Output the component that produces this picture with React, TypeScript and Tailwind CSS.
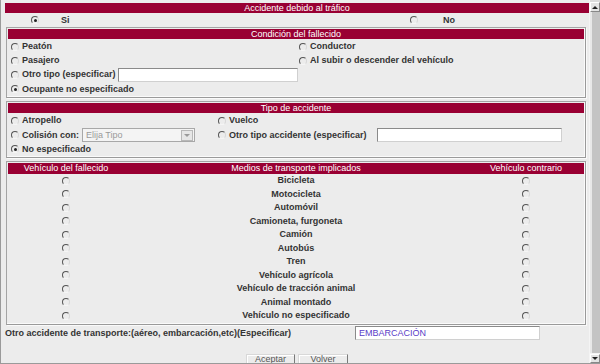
import React from 'react';

const RED = 'bg-[#990033]';

function Radio({ checked = false }: { checked?: boolean }) {
  return (
    <span className="inline-flex h-[8px] w-[8px] shrink-0 items-center justify-center rounded-full border border-t-[#555] border-l-[#555] border-r-[#d8d8d8] border-b-[#f6f6f6] bg-[#ececec]">
      {checked && <span className="h-[3px] w-[3px] rounded-full bg-[#222]" />}
    </span>
  );
}

function Option({ label, checked = false }: { label: string; checked?: boolean }) {
  return (
    <div className="flex shrink-0 items-center gap-[3px] pl-[3px]">
      <Radio checked={checked} />
      <span className="font-bold text-[#333]">{label}</span>
    </div>
  );
}

function TextBox({ className = '', value = '' }: { className?: string; value?: string }) {
  return (
    <div
      className={`flex h-[14px] items-center border border-t-[#8a8a8a] border-l-[#8a8a8a] border-r-[#d0d0d0] border-b-[#d0d0d0] bg-white px-[3px] text-[#5a3cc8] ${className}`}
    >
      {value}
    </div>
  );
}

function Header({ children }: { children: React.ReactNode }) {
  return <div className={`${RED} flex h-[10px] items-center justify-center text-white leading-none`}>{children}</div>;
}

function Box({ children }: { children: React.ReactNode }) {
  return (
    <div className="ml-[1px] mr-[3px] border border-t-[#a4a4a4] border-l-[#a4a4a4] border-r-[#9a9a9a] border-b-[#9a9a9a] p-[1px] shadow-[inset_-1px_-1px_0_#fafafa,1px_1px_0_#fafafa]">
      {children}
    </div>
  );
}

const transports = [
  'Bicicleta',
  'Motocicleta',
  'Automóvil',
  'Camioneta, furgoneta',
  'Camión',
  'Autobús',
  'Tren',
  'Vehículo agrícola',
  'Vehículo de tracción animal',
  'Animal montado',
  'Vehículo no especificado',
];

export default function App() {
  return (
    <div className="flex h-[364px] w-[600px] overflow-hidden whitespace-nowrap border-b border-[#9a9a9a] bg-[#ececec] font-['Liberation_Sans',Arial,sans-serif] text-[9px] leading-none text-[#333]">
      <div className="w-[589px] shrink-0 border-l border-[#9a9a9a] pl-[4px] pt-[3px]">
        <Header>Accidente debido al tráfico</Header>

        <div className="grid h-[14px] grid-cols-2 items-center">
          <div className="flex items-center gap-[22px] pl-[26px]">
            <Radio checked />
            <span className="font-bold">Si</span>
          </div>
          <div className="flex items-center gap-[25px] pl-[113px]">
            <Radio />
            <span className="font-bold">No</span>
          </div>
        </div>

        <Box>
          <Header>Condición del fallecido</Header>
          <div className="grid grid-cols-2">
            <div className="flex h-[15px] items-center">
              <Option label="Peatón" />
            </div>
            <div className="flex h-[15px] items-center">
              <Option label="Conductor" />
            </div>
            <div className="flex h-[13px] items-center">
              <Option label="Pasajero" />
            </div>
            <div className="flex h-[13px] items-center">
              <Option label="Al subir o descender del vehículo" />
            </div>
            <div className="flex h-[15px] items-center">
              <Option label="Otro tipo (especificar)" />
              <TextBox className="ml-[2px] w-[180px] shrink-0" />
            </div>
            <div />
            <div className="flex h-[14px] items-center">
              <Option label="Ocupante no especificado" checked />
            </div>
          </div>
        </Box>

        <div className="mt-[3px]">
          <Box>
            <Header>Tipo de accidente</Header>
            <div className="grid grid-cols-[207px_1fr]">
              <div className="flex h-[15px] items-center">
                <Option label="Atropello" />
              </div>
              <div className="flex h-[15px] items-center">
                <Option label="Vuelco" />
              </div>
              <div className="flex h-[14px] items-center">
                <Option label="Colisión con:" />
                <div className="ml-[3px] flex h-[14px] w-[113px] items-center border border-[#a8a8a8] bg-[#f4f4f4]">
                  <span className="flex-1 pl-[3px] text-[#9a9a9a]">Elija Tipo</span>
                  <span className="mr-[1px] flex h-[11px] w-[12px] items-center justify-center border border-[#b8b8b8] bg-[#e6e6e6]">
                    <span className="h-0 w-0 border-x-[3px] border-t-[3px] border-x-transparent border-t-[#9a9a9a]" />
                  </span>
                </div>
              </div>
              <div className="flex h-[14px] items-center">
                <Option label="Otro tipo accidente (especificar)" />
                <TextBox className="ml-[10px] w-[185px] shrink-0" />
              </div>
              <div className="flex h-[14px] items-center">
                <Option label="No especificado" checked />
              </div>
            </div>
          </Box>
        </div>

        <div className="mt-[3px]">
          <Box>
            <div className={`${RED} grid h-[11px] grid-cols-[116px_1fr_116px] items-center text-center text-white`}>
              <span>Vehículo del fallecido</span>
              <span>Medios de transporte implicados</span>
              <span>Vehículo contrario</span>
            </div>
            {transports.map((t) => (
              <div key={t} className="grid h-[13.5px] grid-cols-[116px_1fr_116px] items-center">
                <div className="flex justify-center">
                  <Radio />
                </div>
                <span className="text-center font-bold">{t}</span>
                <div className="flex justify-center">
                  <Radio />
                </div>
              </div>
            ))}
          </Box>
        </div>

        <div className="mt-[1px] flex h-[15px] items-center">
          <span className="w-[350px] shrink-0 font-bold">Otro accidente de transporte:(aéreo, embarcación,etc)(Especificar)</span>
          <TextBox className="w-[185px] shrink-0" value="EMBARCACIÓN" />
        </div>

        <div className="mt-[13px] flex justify-center gap-[3px]">
          <button className="h-[16px] w-[49px] border border-t-[#d8d8d8] border-l-[#d8d8d8] border-r-[#7a7a7a] border-b-[#7a7a7a] bg-[#ececec] pb-[4px] text-[9px] text-[#555] shadow-[inset_1px_1px_0_#fff]">
            Aceptar
          </button>
          <button className="h-[16px] w-[50px] border border-t-[#d8d8d8] border-l-[#d8d8d8] border-r-[#7a7a7a] border-b-[#7a7a7a] bg-[#ececec] pb-[4px] text-[9px] text-[#555] shadow-[inset_1px_1px_0_#fff]">
            Volver
          </button>
        </div>
      </div>

      <div className="flex w-[11px] shrink-0 flex-col border-l border-[#f4f4f4] bg-[#dcdcdc] pt-[2px]">
        <div className="flex h-[10px] items-center justify-center border border-t-[#fff] border-l-[#fff] border-r-[#888] border-b-[#888] bg-[#e4e4e4]">
          <span className="h-0 w-0 border-x-[3px] border-b-[3px] border-x-transparent border-b-[#222]" />
        </div>
        <div className="flex-1 border-l-2 border-[#e8e8e8] bg-[#c4c4c4]" />
        <div className="h-[1px] bg-[#f4f4f4]" />
        <div className="flex h-[9px] items-center justify-center border border-t-[#fff] border-l-[#fff] border-r-[#888] border-b-[#888] bg-[#e4e4e4]">
          <span className="h-0 w-0 border-x-[3px] border-t-[3px] border-x-transparent border-t-[#222]" />
        </div>
      </div>
    </div>
  );
}
